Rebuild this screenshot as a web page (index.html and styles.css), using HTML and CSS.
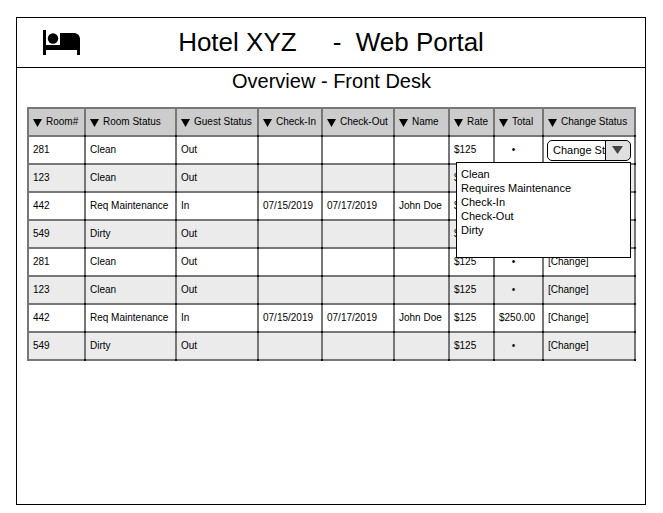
FILE: index.html
```html
<!DOCTYPE html>
<html lang="en">
<head>
<meta charset="utf-8">
<title>Hotel XYZ - Web Portal</title>
<link rel="stylesheet" href="styles.css">
</head>
<body>
<div class="portal">
  <header class="topbar">
    <svg class="logo" viewBox="0 0 37 25" aria-hidden="true">
      <path d="M0 0h3v15h14V3h13.500c3.800 0 6.500 2.300 6.500 6V25h-3v-5H3v5H0z"/>
      <circle cx="10" cy="8.500" r="5.200"/>
    </svg>
    <h1 class="title"><span>Hotel XYZ</span><span>-&nbsp; Web Portal</span></h1>
  </header>
  <main class="content">
    <h2 class="subtitle">Overview - Front Desk</h2>
    <table class="rooms">
      <colgroup>
        <col class="c-room"><col class="c-status"><col class="c-guest"><col class="c-in"><col class="c-out"><col class="c-name"><col class="c-rate"><col class="c-total"><col>
      </colgroup>
      <thead>
        <tr>
          <th><button class="sort">Room#</button></th>
          <th><button class="sort">Room Status</button></th>
          <th><button class="sort">Guest Status</button></th>
          <th><button class="sort">Check-In</button></th>
          <th><button class="sort">Check-Out</button></th>
          <th><button class="sort">Name</button></th>
          <th><button class="sort">Rate</button></th>
          <th><button class="sort">Total</button></th>
          <th><button class="sort">Change Status</button></th>
        </tr>
      </thead>
      <tbody>
        <tr><td>281</td><td>Clean</td><td>Out</td><td></td><td></td><td></td><td>$125</td><td class="none">•</td>
          <td class="action">
            <div class="picker">
              <select class="picker-select" aria-label="Change Status"><option>Change Status</option></select>
              <ul class="menu">
                <li><button>Clean</button></li>
                <li><button>Requires Maintenance</button></li>
                <li><button>Check-In</button></li>
                <li><button>Check-Out</button></li>
                <li><button>Dirty</button></li>
              </ul>
            </div>
          </td></tr>
        <tr><td>123</td><td>Clean</td><td>Out</td><td></td><td></td><td></td><td>$125</td><td class="none">•</td><td><a href="#">[Change]</a></td></tr>
        <tr><td>442</td><td>Req Maintenance</td><td>In</td><td>07/15/2019</td><td>07/17/2019</td><td>John Doe</td><td>$125</td><td>$250.00</td><td><a href="#">[Change]</a></td></tr>
        <tr><td>549</td><td>Dirty</td><td>Out</td><td></td><td></td><td></td><td>$125</td><td class="none">•</td><td><a href="#">[Change]</a></td></tr>
        <tr><td>281</td><td>Clean</td><td>Out</td><td></td><td></td><td></td><td>$125</td><td class="none">•</td><td><a href="#">[Change]</a></td></tr>
        <tr><td>123</td><td>Clean</td><td>Out</td><td></td><td></td><td></td><td>$125</td><td class="none">•</td><td><a href="#">[Change]</a></td></tr>
        <tr><td>442</td><td>Req Maintenance</td><td>In</td><td>07/15/2019</td><td>07/17/2019</td><td>John Doe</td><td>$125</td><td>$250.00</td><td><a href="#">[Change]</a></td></tr>
        <tr><td>549</td><td>Dirty</td><td>Out</td><td></td><td></td><td></td><td>$125</td><td class="none">•</td><td><a href="#">[Change]</a></td></tr>
      </tbody>
    </table>
  </main>
</div>
</body>
</html>
```
FILE: styles.css
```css
* { box-sizing: border-box; }

body {
  margin: 0;
  padding: 17px 17px 8px 16px;
  min-height: 100vh;
  display: flex;
  background: #fff;
  color: #000;
  font-family: "Liberation Sans", Arial, sans-serif;
}

.portal {
  flex: 1;
  min-width: 0;
  border: 1px solid #000;
}

.topbar {
  display: grid;
  grid-template-columns: 64px 1fr 64px;
  align-items: center;
  height: 50px;
  padding-left: 26px;
  padding-right: 26px;
  border-bottom: 1px solid #000;
}

.logo {
  width: 37px;
  height: 25px;
}

.title {
  display: flex;
  justify-content: center;
  gap: 36px;
  margin: 0;
  padding-bottom: 2px;
  font-size: 26px;
  font-weight: 400;
  line-height: 30px;
}

.content { padding: 0 9px 0 10px; }

.subtitle {
  margin: 0 0 13px;
  font-size: 20px;
  font-weight: 400;
  line-height: 26px;
  text-align: center;
}

.rooms {
  width: 100%;
  table-layout: fixed;
  border-collapse: separate;
  border-spacing: 0;
  border-top: 2px solid #777;
  border-left: 2px solid #777;
  font-size: 10px;
  line-height: 12px;
}

.c-room { width: 57px; }
.c-status { width: 91px; }
.c-guest { width: 82px; }
.c-in { width: 64px; }
.c-out { width: 72px; }
.c-name { width: 55px; }
.c-rate { width: 45px; }
.c-total { width: 49px; }

/* Grid lines with darker crossings */
.rooms th,
.rooms td {
  height: 28px;
  padding: 0 2px 2px 4px;
  text-align: left;
  font-weight: 400;
  white-space: nowrap;
  background:
    linear-gradient(#111, #111) right bottom / 2px 2px no-repeat,
    linear-gradient(#777, #777) right / 2px 100% no-repeat,
    linear-gradient(#777, #777) bottom / 100% 2px no-repeat;
}

.rooms th { background-color: #ccc; }
.rooms tbody tr:nth-child(even) { background: #ebebeb; }
.rooms .none { text-align: center; padding-right: 16px; }
.rooms .action { padding: 0 5px 2px 3px; }

.rooms a { color: inherit; text-decoration: none; }

.sort {
  display: flex;
  align-items: center;
  gap: 4px;
  padding: 0;
  border: 0;
  background: none;
  color: #000;
  font: inherit;
}

.sort::before {
  content: "";
  width: 9px;
  height: 8px;
  margin-top: 2px;
  background: #000;
  clip-path: polygon(0 0, 100% 0, 50% 100%);
}

.picker { position: relative; }

.picker-select {
  display: block;
  appearance: none;
  width: 100%;
  height: 21px;
  padding: 0 25px 0 5px;
  border: 1px solid #000;
  border-radius: 5px;
  color: #000;
  font: 11px/14px "Liberation Sans", Arial, sans-serif;
  background:
    url("data:image/svg+xml,%3Csvg xmlns='http://www.w3.org/2000/svg' viewBox='0 0 25 19'%3E%3Cpath fill='%23e0e0e0' d='M0 0h25v19H0z'/%3E%3Cpath d='M0 0h1v19H0z'/%3E%3Cpath fill='%23444' d='M7 5h11l-5.500 8z'/%3E%3C/svg%3E") right / 25px 19px no-repeat,
    #fff;
}

.menu {
  position: absolute;
  top: 100%;
  right: 0;
  z-index: 1;
  width: 175px;
  height: 96px;
  margin: 1px 0 0;
  padding: 4px 4px;
  border: 1px solid #000;
  background: #fff;
  list-style: none;
}

.menu button {
  display: block;
  width: 100%;
  padding: 0;
  border: 0;
  background: none;
  color: #000;
  text-align: left;
  font: 11px/14px "Liberation Sans", Arial, sans-serif;
}
```
